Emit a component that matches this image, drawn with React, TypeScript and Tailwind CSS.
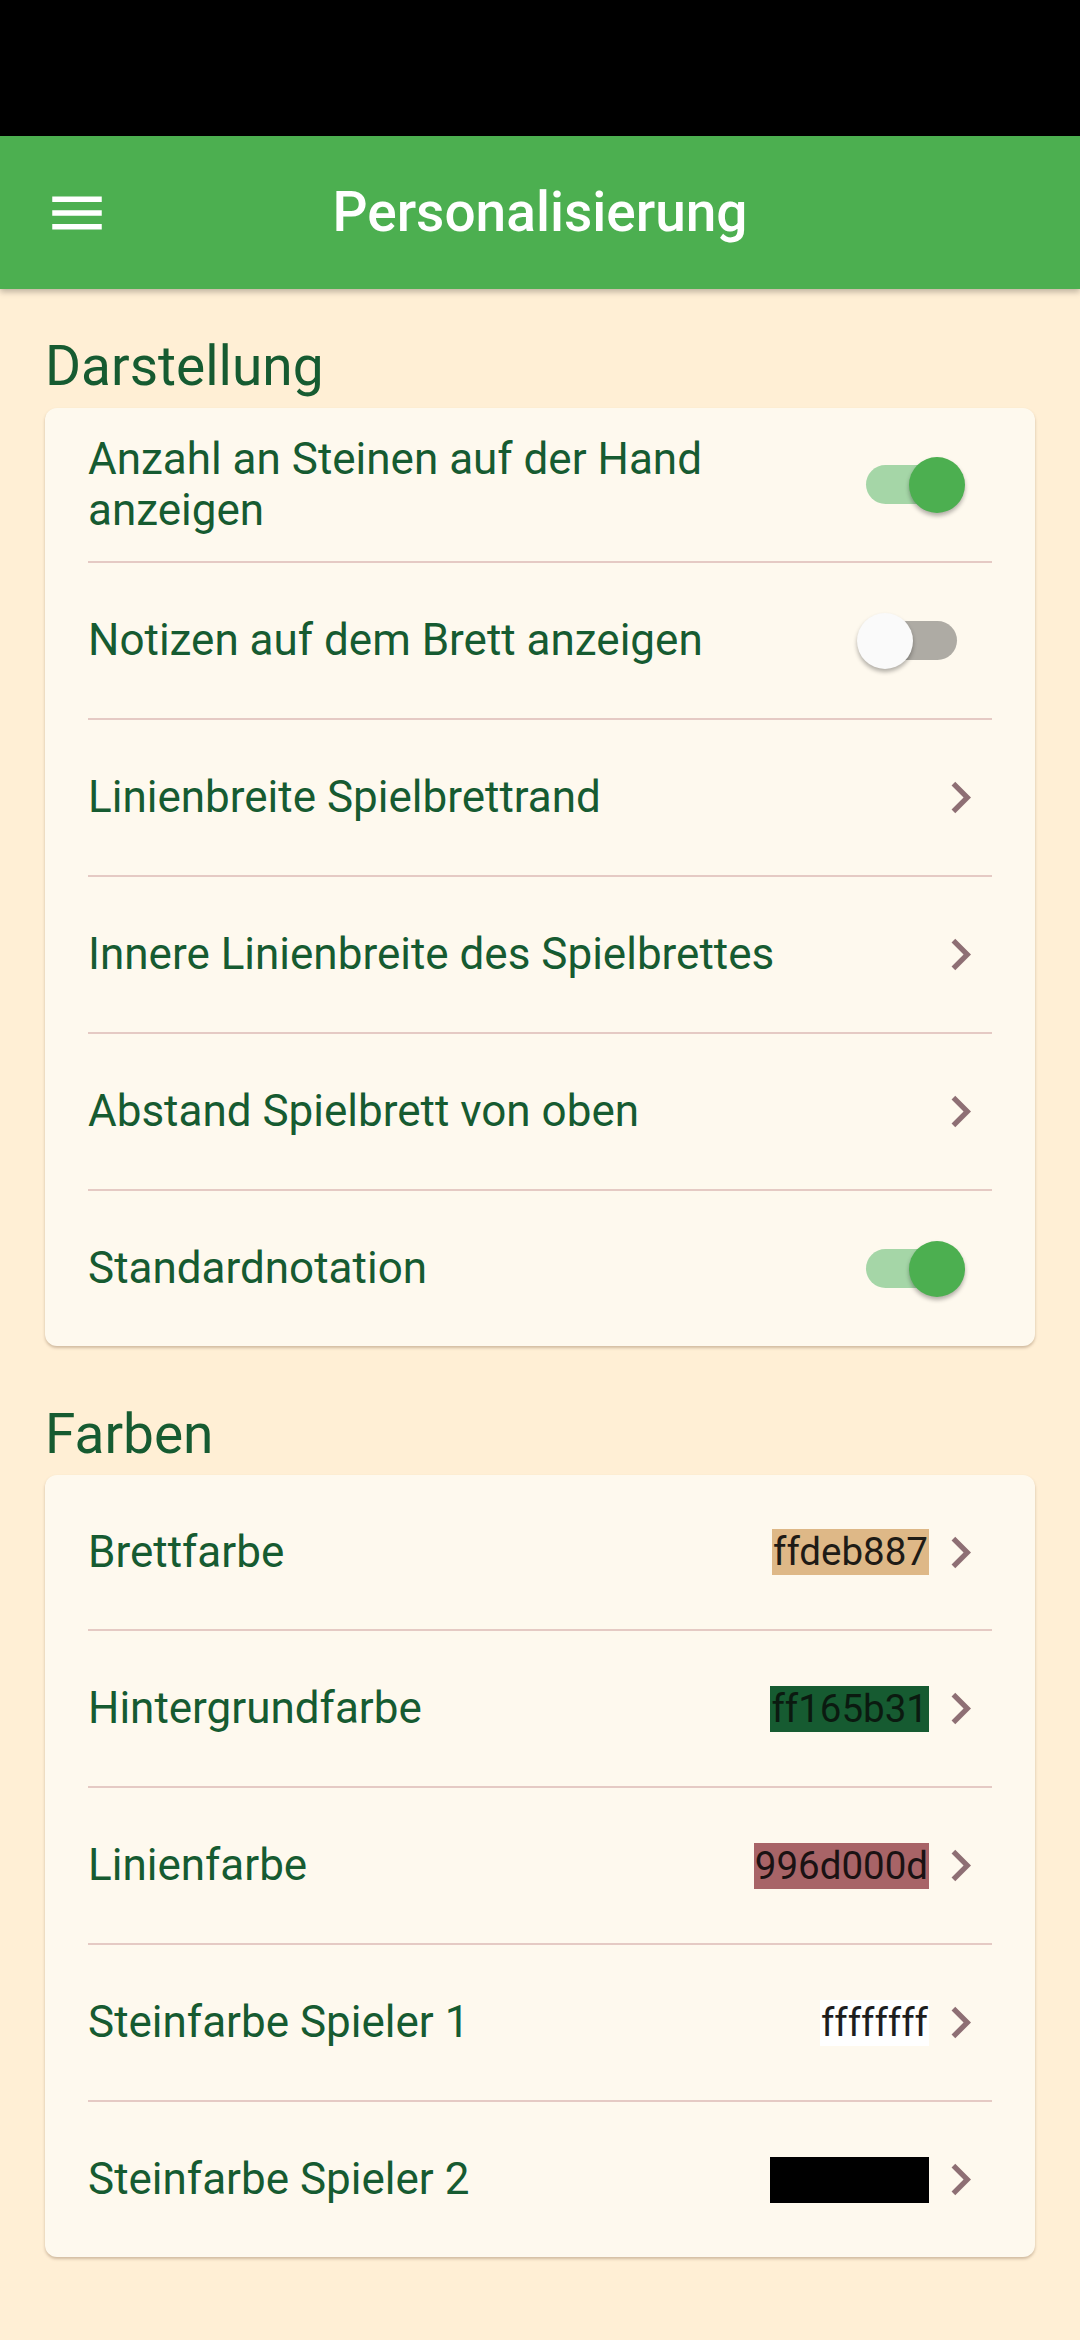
import React from "react";

const Chevron = () => (
  <svg viewBox="0 0 24 24" className="w-[63px] h-[63px] shrink-0" fill="#8E6F74">
    <path d="M10 6L8.59 7.41 13.17 12l-4.58 4.59L10 18l6-6z" />
  </svg>
);

const Toggle = ({ on }: { on: boolean }) => (
  <div className="relative mr-[27px] w-[108px] h-[63px] flex items-center justify-center shrink-0">
    <div
      className={
        on
          ? "w-[91px] h-[39px] rounded-full bg-[#A5D6A7]"
          : "w-[91px] h-[39px] rounded-full bg-[#AEABA4]"
      }
    />
    <div
      className={
        on
          ? "absolute top-[4px] right-[0px] w-[56px] h-[56px] rounded-full bg-[#4CAF50] shadow-[0_3px_4px_rgba(0,0,0,0.3)]"
          : "absolute top-[4px] left-[0px] w-[56px] h-[56px] rounded-full bg-[#FAFAFA] shadow-[0_3px_4px_rgba(0,0,0,0.3)]"
      }
    />
  </div>
);

const Divider = () => <div className="mx-[43px] h-[2px] bg-[#E5CAC4]" />;

const Row = ({
  children,
  right,
  first,
}: {
  children: React.ReactNode;
  right: React.ReactNode;
  first?: boolean;
}) => (
  <div className={first ? "h-[153px] flex items-center px-[43px]" : "h-[155px] flex items-center px-[43px]"}>
    <div className="flex-1 pr-[60px] text-[44px] leading-[51px] text-[#165B31]">{children}</div>
    {right}
  </div>
);

const ColorRow = ({
  label,
  value,
  bg,
  text,
  first,
}: {
  label: string;
  value: string;
  bg: string;
  text: string;
  first?: boolean;
}) => (
  <div className={first ? "h-[154px] flex items-center px-[43px]" : "h-[155px] flex items-center px-[43px]"}>
    <div className="flex-1 text-[44px] leading-[51px] text-[#165B31]">{label}</div>
    <div className="flex items-center">
      <span
        className="text-[38.5px] leading-[46px] px-[1px]"
        style={{ backgroundColor: bg, color: text }}
      >
        {value}
      </span>
      <Chevron />
    </div>
  </div>
);

export default function App() {
  return (
    <div
      className="w-[1080px] min-h-[2340px] bg-[#FFEFD5] flex flex-col"
      style={{ fontFamily: "Roboto, 'Noto Sans', sans-serif" }}
    >
      <div className="h-[136px] bg-black shrink-0" />
      <div className="relative h-[153px] bg-[#4CAF50] flex items-center justify-center shrink-0 shadow-[0_3px_6px_rgba(0,0,0,0.25)] z-10">
        <svg viewBox="0 0 24 24" className="absolute left-[44px] top-[44px] w-[66px] h-[66px]" fill="white">
          <path d="M3 18h18v-2H3v2zm0-5h18v-2H3v2zm0-7v2h18V6H3z" />
        </svg>
        <span className="text-white text-[55px] font-medium leading-none">Personalisierung</span>
      </div>

      <div className="px-[45px] flex flex-col">
        <div className="mt-[45px] h-[64px] text-[55px] leading-[64px] text-[#165B31]">Darstellung</div>
        <div className="mt-[10px] bg-[#FEF9EE] rounded-[12px] shadow-[0_2px_3px_rgba(120,90,60,0.35)]">
          <Row first right={<Toggle on={true} />}>Anzahl an Steinen auf der Hand anzeigen</Row>
          <Divider />
          <Row right={<Toggle on={false} />}>Notizen auf dem Brett anzeigen</Row>
          <Divider />
          <Row right={<Chevron />}>Linienbreite Spielbrettrand</Row>
          <Divider />
          <Row right={<Chevron />}>Innere Linienbreite des Spielbrettes</Row>
          <Divider />
          <Row right={<Chevron />}>Abstand Spielbrett von oben</Row>
          <Divider />
          <Row right={<Toggle on={true} />}>Standardnotation</Row>
        </div>

        <div className="mt-[56px] h-[64px] text-[55px] leading-[64px] text-[#165B31]">Farben</div>
        <div className="mt-[9px] bg-[#FEF9EE] rounded-[12px] shadow-[0_2px_3px_rgba(120,90,60,0.35)]">
          <ColorRow first label="Brettfarbe" value="ffdeb887" bg="#DEB887" text="#1E1B16" />
          <Divider />
          <ColorRow label="Hintergrundfarbe" value="ff165b31" bg="#165B31" text="#0B1A10" />
          <Divider />
          <ColorRow label="Linienfarbe" value="996d000d" bg="#A86467" text="#1A1213" />
          <Divider />
          <ColorRow label="Steinfarbe Spieler 1" value="ffffffff" bg="#FFFFFF" text="#1E1E1E" />
          <Divider />
          <ColorRow label="Steinfarbe Spieler 2" value="ff000000" bg="#000000" text="#000000" />
        </div>
      </div>
    </div>
  );
}
